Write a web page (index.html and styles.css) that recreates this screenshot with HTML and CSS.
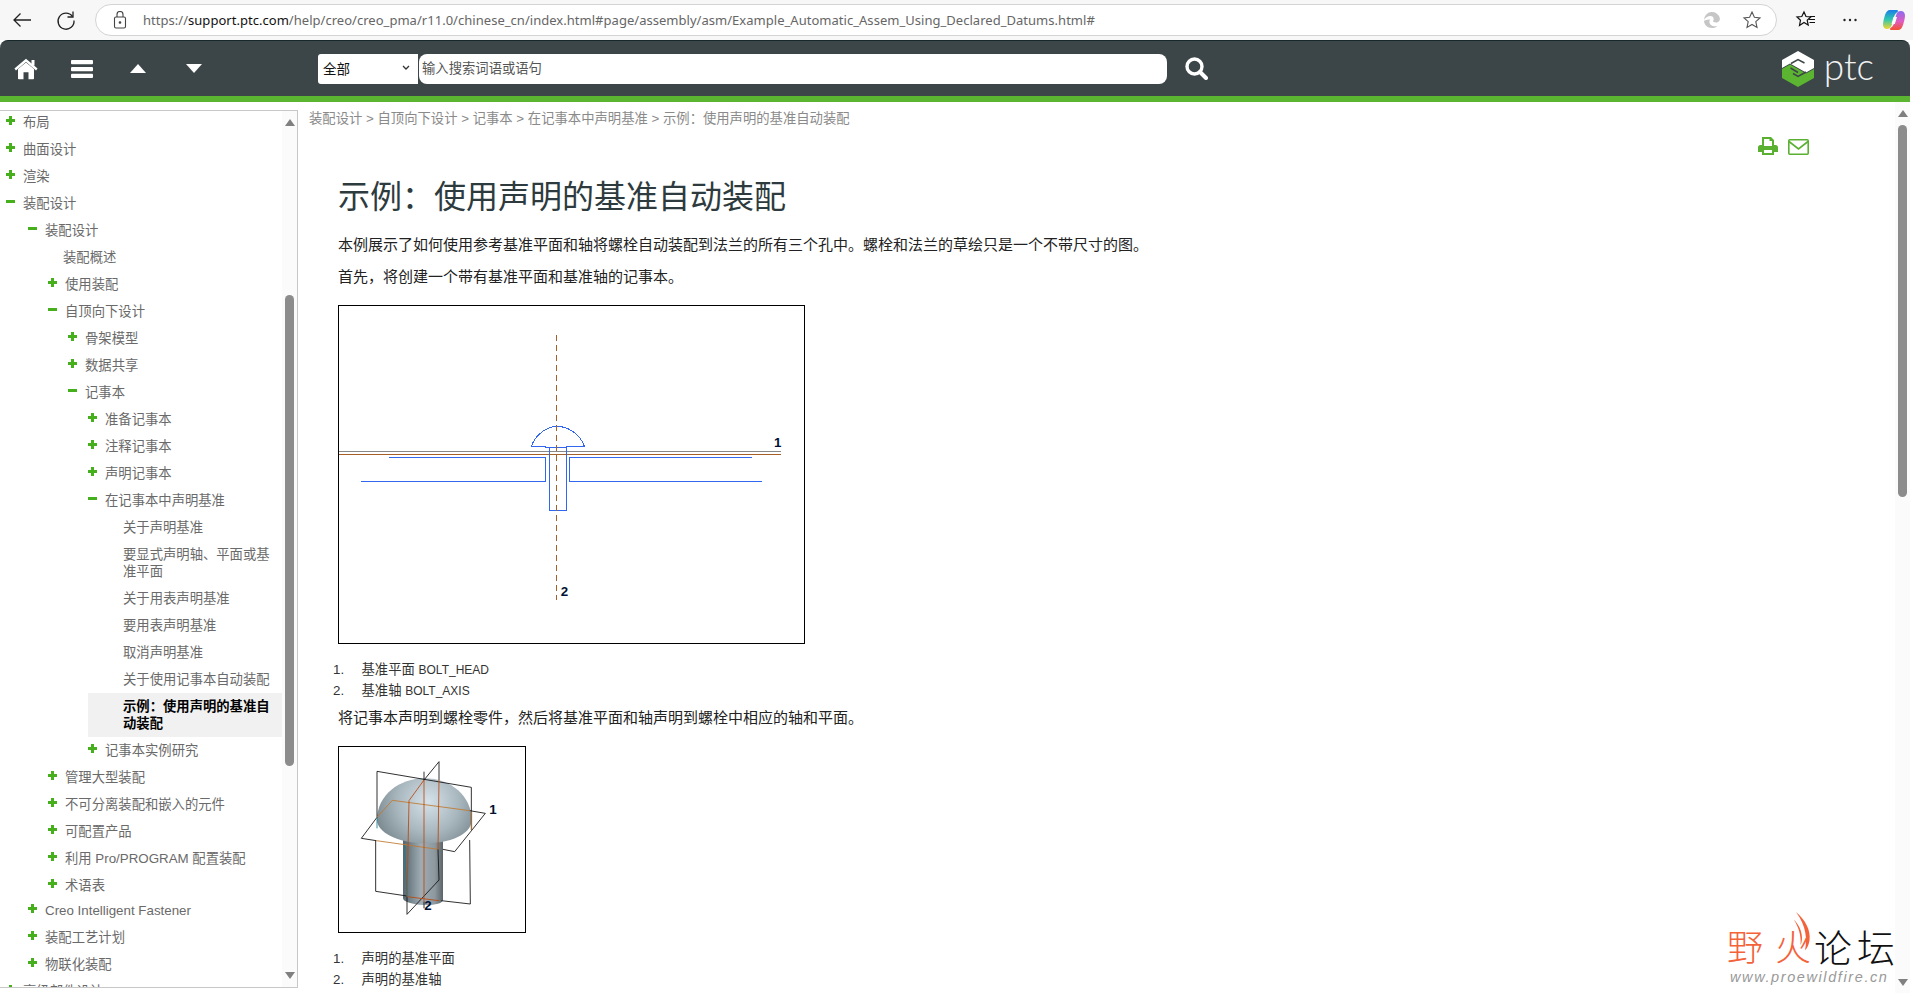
FILE: index.html
```html
<!DOCTYPE html>
<html lang="zh-CN">
<head>
<meta charset="utf-8">
<title>示例：使用声明的基准自动装配</title>
<link rel="stylesheet" href="styles.css">
</head>
<body>
<div class="browser">
  <span class="bicon"><svg width="24" height="24" viewBox="0 0 24 24" fill="none" stroke="#222" stroke-width="1.3"><path d="M21 12H4M10.5 5.5 4 12l6.5 6.5"/></svg></span>
  <span class="bicon"><svg width="24" height="24" viewBox="0 0 24 24" fill="none" stroke="#222" stroke-width="1.3"><path d="M18.5 8.5A8 8 0 1 0 20 12.5"/><path d="M19 3.5v5.5h-5.5"/></svg></span>
  <div class="pill">
    <span class="lock"><svg width="14" height="18" viewBox="0 0 14 18" fill="none" stroke="#444" stroke-width="1.1"><rect x="1.5" y="6" width="11" height="11" rx="1.5"/><path d="M4 6V3.5a3 3 0 0 1 6 0V6"/><circle cx="7" cy="11.5" r=".8" fill="#444"/></svg></span>
    <span class="url">https://<b>support.ptc.com</b>/help/creo/creo_pma/r11.0/chinese_cn/index.html#page/assembly/asm/Example_Automatic_Assem_Using_Declared_Datums.html#</span>
    <span class="bicon"><svg width="20" height="20" viewBox="0 0 20 20"><path fill="#c6c6c6" d="M2 10a8 8 0 0 1 15.800-1.800c.5 2.500-1.500 4.300-3.800 4.300-1.800 0-3-.8-3-1.500 0-.5.700-.6.700-1.800C11.700 7 10 5.800 8 6 4.800 6.300 3 8.500 2 10z"/><path fill="#c6c6c6" d="M2 11c.2 4.200 3.700 7 8 7 2.200 0 4.300-.8 5.700-2.300-2 .8-5 .8-6.800-.7C7.200 13.700 7 11 8 9.500 5.500 9.500 3.300 10 2 11z"/></svg></span>
    <span class="bicon star"><svg width="20" height="20" viewBox="0 0 20 20" fill="none" stroke="#555" stroke-width="1.1"><path d="m10 2 2.400 5.300 5.600.6-4.200 3.800 1.200 5.700-5-2.900-5 2.900 1.200-5.700L2 7.900l5.600-.6z"/></svg></span>
  </div>
  <span class="bicon fav"><svg width="22" height="22" viewBox="0 0 22 22" fill="none" stroke="#111" stroke-width="1.2"><path d="m9 3 2 4.500 4.800.5-3.600 3.200 1 4.800L9 13.500 4.500 16.500l1-5.300L2 8l4.800-.5z"/><path d="M14 10.500h6M14.500 13.500h5.500M15 7.500h5"/></svg></span>
  <span class="bicon dots"><svg width="20" height="20" viewBox="0 0 20 20" fill="#222"><circle cx="4.500" cy="10" r="1.200"/><circle cx="10" cy="10" r="1.200"/><circle cx="15.500" cy="10" r="1.200"/></svg></span>
  <span class="bicon dots"><svg width="22" height="22" viewBox="0 0 22 22"><defs><linearGradient id="cpa" x1="0" y1="0" x2="0" y2="1"><stop offset="0" stop-color="#1b7fe8"/><stop offset=".5" stop-color="#2fc7b0"/><stop offset="1" stop-color="#f4d62c"/></linearGradient><linearGradient id="cpb" x1="0" y1="0" x2="0" y2="1"><stop offset="0" stop-color="#8a6cf0"/><stop offset=".55" stop-color="#e05cc0"/><stop offset="1" stop-color="#f4502c"/></linearGradient></defs><path fill="url(#cpa)" d="M7 1h7c1 0 1.500 1 .5 2-2.500 1.500-3.500 4-4 6.500l-1.500 6C8 18 6.500 20 4 20 1.500 20 0 18 0 15.500 0 13 1 9 2 6 3 3 4.500 1 7 1z"/><path fill="url(#cpb)" d="M15 21H8c-1 0-1.500-1-.5-2 2.500-1.500 3.500-4 4-6.500l1.500-6C13.500 4 15 2 18 2c2.500 0 4 2 4 4.500 0 2.500-1 6.500-2 9.500-1 3-2.500 5-5 5z"/><path fill="#fff" d="M10.500 8h3.500l-2.200 7H8.500z"/></svg></span>
</div>

<header class="top">
  <div class="tools">
    <span class="tool"><svg width="24" height="22" viewBox="0 0 24 22" fill="#fff"><path d="M12 4.500 4 11v9.500a.8.8 0 0 0 .8.8H9.500v-7h5v7h4.700a.8.8 0 0 0 .8-.8V11z"/><path fill="none" stroke="#fff" stroke-width="2.400" d="M1.200 11.500 12 2.300l10.800 9.200"/><path d="M17.500 2h3v5.500h-3z"/></svg></span>
    <span class="tool"><svg width="22" height="18" viewBox="0 0 22 18" fill="#fff"><rect width="22" height="4.200" rx="1"/><rect y="7" width="22" height="4.200" rx="1"/><rect y="13.800" width="22" height="4.200" rx="1"/></svg></span>
    <span class="tool"><svg width="16" height="9" viewBox="0 0 16 9" fill="#fff"><path d="M8 0l8 9H0z"/></svg></span>
    <span class="tool"><svg width="16" height="9" viewBox="0 0 16 9" fill="#fff"><path d="M0 0h16L8 9z"/></svg></span>
  </div>
  <div class="scope"><span>全部</span><svg width="8" height="5" viewBox="0 0 8 5" fill="none" stroke="#333" stroke-width="1.300"><path d="m1 1 3 3 3-3"/></svg></div>
  <div class="search">输入搜索词语或语句</div>
  <span class="find"><svg width="23" height="23" viewBox="0 0 23 23" fill="none" stroke="#fff"><circle cx="9.500" cy="9.500" r="7.500" stroke-width="3.400"/><path d="m15 15 6 6" stroke-width="4" stroke-linecap="round"/></svg></span>
  <div class="logo">
    <svg width="32" height="36" viewBox="0 0 32 36"><path fill="#5cb531" d="M0 18 8 13.500 24 22.500 32 18v9L16 36 0 27z"/><path fill="#fff" d="M16 0l16 9v8l-8 4.500-16-9L0 17V9z"/><path fill="none" stroke="#3c4547" stroke-width="1.500" d="M9 12.500 16 8.500l6.500 3.500M8.500 17 16 21.500M11 22.500l5 3 8-4.500"/></svg>
    <span class="ptc">ptc</span>
  </div>
</header>
<div class="accent"></div>

<div class="content">
  <aside class="side">
    <ul class="tree">
      <li class="row l0 plus"><i class="tw"></i><span>布局</span></li>
      <li class="row l0 plus"><i class="tw"></i><span>曲面设计</span></li>
      <li class="row l0 plus"><i class="tw"></i><span>渲染</span></li>
      <li class="row l0 minus"><i class="tw"></i><span>装配设计</span></li>
      <li class="row l1 minus"><i class="tw"></i><span>装配设计</span></li>
      <li class="row leaf2"><span>装配概述</span></li>
      <li class="row l2 plus"><i class="tw"></i><span>使用装配</span></li>
      <li class="row l2 minus"><i class="tw"></i><span>自顶向下设计</span></li>
      <li class="row l3 plus"><i class="tw"></i><span>骨架模型</span></li>
      <li class="row l3 plus"><i class="tw"></i><span>数据共享</span></li>
      <li class="row l3 minus"><i class="tw"></i><span>记事本</span></li>
      <li class="row l4 plus"><i class="tw"></i><span>准备记事本</span></li>
      <li class="row l4 plus"><i class="tw"></i><span>注释记事本</span></li>
      <li class="row l4 plus"><i class="tw"></i><span>声明记事本</span></li>
      <li class="row l4 minus"><i class="tw"></i><span>在记事本中声明基准</span></li>
      <li class="row leaf5"><span>关于声明基准</span></li>
      <li class="row leaf5"><span>要显式声明轴、平面或基准平面</span></li>
      <li class="row leaf5"><span>关于用表声明基准</span></li>
      <li class="row leaf5"><span>要用表声明基准</span></li>
      <li class="row leaf5"><span>取消声明基准</span></li>
      <li class="row leaf5"><span>关于使用记事本自动装配</span></li>
      <li class="row leaf5 current"><span>示例：使用声明的基准自动装配</span></li>
      <li class="row l4 plus"><i class="tw"></i><span>记事本实例研究</span></li>
      <li class="row l2 plus"><i class="tw"></i><span>管理大型装配</span></li>
      <li class="row l2 plus"><i class="tw"></i><span>不可分离装配和嵌入的元件</span></li>
      <li class="row l2 plus"><i class="tw"></i><span>可配置产品</span></li>
      <li class="row l2 plus"><i class="tw"></i><span>利用 Pro/PROGRAM 配置装配</span></li>
      <li class="row l2 plus"><i class="tw"></i><span>术语表</span></li>
      <li class="row l1 plus pull"><i class="tw"></i><span>Creo Intelligent Fastener</span></li>
      <li class="row l1 plus"><i class="tw"></i><span>装配工艺计划</span></li>
      <li class="row l1 plus"><i class="tw"></i><span>物联化装配</span></li>
      <li class="row l0 plus"><i class="tw"></i><span>高级部件设计</span></li>
    </ul>
    <div class="sb sb-tree"><i class="arrow-up"></i><i class="thumb"></i><i class="arrow-down"></i></div>
  </aside>

  <main class="main">
    <nav class="crumbs">装配设计 &gt; 自顶向下设计 &gt; 记事本 &gt; 在记事本中声明基准 &gt; 示例：使用声明的基准自动装配</nav>
    <div class="actions">
      <svg width="20" height="18" viewBox="0 0 20 18" fill="#5ab031"><path fill-rule="evenodd" d="M4 0h9l3 3v5h1.500A2.500 2.500 0 0 1 20 10.500V15h-4v3H4v-3H0v-4.500A2.500 2.500 0 0 1 2.500 8H4zm2 2v7h8V4h-2.500V2zM6 13v3h8v-3z"/></svg>
      <svg width="21" height="16" viewBox="0 0 21 16" fill="none" stroke="#5ab031" stroke-width="1.600"><rect x=".8" y=".8" width="19.400" height="14.400" rx="1"/><path d="m1 2.500 9.500 7.500L20 2.500"/></svg>
    </div>
    <article class="doc">
      <h1>示例：使用声明的基准自动装配</h1>
      <p class="p1">本例展示了如何使用参考基准平面和轴将螺栓自动装配到法兰的所有三个孔中。螺栓和法兰的草绘只是一个不带尺寸的图。</p>
      <p class="p2">首先，将创建一个带有基准平面和基准轴的记事本。</p>
      <figure class="fig fig1">
        <svg width="465" height="337" viewBox="58 48 1395 1011" fill="none" stroke-width="3">
          <path stroke="#888" d="M58 485H1383"/>
          <path stroke="#a5602a" d="M58 493H1383"/>
          <g stroke="#3366ee">
            <path d="M207 502H677V574H123M1298 502H750V574H1328"/>
            <path d="M688 472V661H739V472"/>
            <path d="M635 469C650 428 688 409 712 409C740 409 780 428 794 469H741V472H676V469Z"/>
          </g>
          <path stroke="#a5602a" stroke-dasharray="18 12" d="M710 135V930"/>
          <text class="fig-label" x="1363" y="472">1</text>
          <text class="fig-label" x="723" y="919">2</text>
        </svg>
      </figure>
      <ol class="notes n1"><li><span>基准平面 <span class="latin">BOLT_HEAD</span></span></li><li><span>基准轴 <span class="latin">BOLT_AXIS</span></span></li></ol>
      <p class="p3">将记事本声明到螺栓零件，然后将基准平面和轴声明到螺栓中相应的轴和平面。</p>
      <figure class="fig fig2">
        <svg width="186" height="185" viewBox="58 51 558 555" fill="none" stroke-width="2.600">
          <defs>
            <radialGradient id="dome" gradientUnits="userSpaceOnUse" cx="325" cy="215" r="170"><stop offset="0" stop-color="#d6e2ea"/><stop offset=".55" stop-color="#a8b6be"/><stop offset="1" stop-color="#78868e"/></radialGradient>
            <linearGradient id="shank" x1="0" y1="0" x2="1" y2="0"><stop offset="0" stop-color="#55656d"/><stop offset=".45" stop-color="#a0acb4"/><stop offset=".8" stop-color="#8c979e"/><stop offset="1" stop-color="#5a6468"/></linearGradient>
          </defs>
          <path fill="url(#shank)" d="M250 320H370V510C370 520 340 527 310 525C280 524 250 515 250 505Z"/>
          <path fill="url(#dome)" d="M172 270C172 195 240 145 315 145C395 145 456 200 456 270C456 305 410 338 320 340C230 340 172 305 172 270Z"/>
          <path stroke="#111" d="M172 124 455 172V300M450 330 452 522 365 512M262 498 168 484V332M172 124V262"/>
          <path stroke="#111" d="M125 325 172 262M125 325 170 332M450 242 497 250 405 365 370 358"/>
          <path stroke="#c07a30" d="M172 262 218 211 450 242M456 245V300M170 332 355 358"/>
          <path stroke="#111" d="M358 95 313 150M358 95V150M355 358 358 450 262 553V500"/>
          <path stroke="#b84a10" d="M313 150 268 212 262 500 358 512M358 150 355 358"/>
          <path stroke="#1c7a8c" d="M172 262V295M255 345 262 500"/>
          <path stroke="#b84a10" d="M313 150V515"/>
          <path stroke="#111" d="M313 125V150M313 515V535"/>
          <text class="fig-label" x="509" y="253">1</text>
          <text class="fig-label" x="314" y="541">2</text>
        </svg>
      </figure>
      <ol class="notes n2"><li><span>声明的基准平面</span></li><li><span>声明的基准轴</span></li></ol>
    </article>
    <div class="sb sb-main"><i class="arrow-up"></i><i class="thumb"></i><i class="arrow-down"></i></div>
  </main>
</div>

<div class="mark">
  <svg class="flame" width="18" height="47" viewBox="0 0 24 52" fill="#f4623a"><path d="M4 0c12 10 20 24 18 38-1 6-3 10-6 13 3-14 2-32-12-51z"/><path d="M1 10c7 7 11 16 11 25 0 4-1 7-2 9 1-12-2-23-9-34z"/></svg>
  <div class="mark-cn"><span class="hot"><span class="ye">野</span>火</span><span class="forum">论<span class="tan">坛</span></span></div>
  <div class="mark-url">www.proewildfire.cn</div>
</div>
</body>
</html>
```
FILE: styles.css
```css
* { box-sizing: border-box; }
html, body { height: 100%; }
body {
  margin: 0;
  height: 993px;
  overflow: hidden;
  background: #fff;
  font-family: "Liberation Sans", "Noto Sans CJK SC", sans-serif;
  display: flex;
  flex-direction: column;
  position: relative;
}
.browser {
  height: 40px;
  flex: none;
  background: #f7f7f7;
  display: flex;
  align-items: center;
  padding-left: 10px;
  gap: 20px;
}
.bicon { width: 24px; height: 24px; display: flex; align-items: center; justify-content: center; flex: none; }
.pill {
  width: 1682px;
  margin-left: -3px;
  height: 32px;
  background: #fff;
  border: 1px solid #d4d4d4;
  border-radius: 16px;
  display: flex;
  align-items: center;
  padding: 0 12px 0 17px;
}
.lock { width: 14px; height: 18px; flex: none; margin-right: 16px; }
.url {
  flex: 1;
  font: 13px "Noto Sans", sans-serif;
  letter-spacing: .03px;
  color: #666;
  white-space: nowrap;
  overflow: hidden;
}
.url b { font-weight: 400; color: #111; }
.star { margin-left: 16px; }
.fav { margin-left: -3px; }
.dots { margin-left: 0; }

.top {
  height: 56px;
  flex: none;
  margin-right: 3px;
  background: #3c4547;
  border-top: 1px solid #16282a;
  border-radius: 8px 8px 0 0;
  display: flex;
  align-items: center;
  padding: 0 36px 0 14px;
}
.tools { display: flex; gap: 32px; width: 304px; flex: none; }
.tool { width: 24px; height: 24px; display: flex; align-items: center; justify-content: center; }
.scope {
  width: 100px;
  height: 30px;
  background: #fff;
  border-radius: 3px 0 0 3px;
  display: flex;
  align-items: center;
  justify-content: space-between;
  padding: 0 8px 2px 5px;
  font-size: 13.500px;
  color: #111;
  flex: none;
}
.search {
  width: 748px;
  height: 30px;
  margin-left: 1px;
  background: #fff;
  border-radius: 8px;
  display: flex;
  align-items: center;
  padding: 0 0 2px 3px;
  font-size: 13.330px;
  color: #555;
  flex: none;
}
.find { width: 23px; height: 23px; margin-left: 18px; flex: none; }
.logo { margin-left: auto; display: flex; align-items: center; gap: 10px; }
.ptc { font: 300 37px/40px Lato, sans-serif; color: #f2f2f2; margin-top: -6px; }
.accent { height: 6px; flex: none; margin-right: 3px; background: #5cb531; }

.content { flex: 1; min-height: 0; display: flex; }
.side {
  width: 298px;
  flex: none;
  height: 878px;
  margin-top: 8px;
  border: 1px solid #c8c8c8;
  border-left: 0;
  display: flex;
}
.tree {
  flex: 1;
  min-width: 0;
  margin: 0;
  padding: 0;
  list-style: none;
  overflow: hidden;
  font-size: 13.330px;
  line-height: 17px;
  color: #6a6a6a;
}
.row { display: flex; padding: 5px 8px 5px 0; }
.row:first-child { margin-top: -2px; }
.tw { width: 9px; height: 9px; margin: 2px 8px 0 0; flex: none; }
.plus .tw {
  background:
    linear-gradient(#45b01c, #45b01c) center / 3px 9px no-repeat,
    linear-gradient(#45b01c, #45b01c) center / 9px 3px no-repeat;
}
.minus .tw { background: linear-gradient(#45b01c, #45b01c) center / 9px 3px no-repeat; }
.l0 { padding-left: 6px; }
.l1 { padding-left: 28px; }
.l2 { padding-left: 48px; }
.l3 { padding-left: 68px; }
.l4 { padding-left: 88px; }
.leaf2 { padding-left: 63px; }
.leaf5 { padding-left: 123px; }
.pull { margin-top: -2px; }
.current { margin-left: 88px; padding-left: 35px; background: #f1f1f1; color: #000; font-weight: 700; }

.sb {
  flex: none;
  width: 15px;
  background: #fbfbfb;
  display: flex;
  flex-direction: column;
  align-items: center;
}
.thumb { display: block; width: 9px; background: #8c8c8c; border-radius: 5px; }
.arrow-up, .arrow-down { display: block; width: 0; height: 0; border-left: 5px solid transparent; border-right: 5px solid transparent; }
.arrow-up { border-bottom: 7px solid #808080; }
.arrow-down { border-top: 7px solid #808080; margin-top: auto; }
.sb-tree { padding: 8px 0; }
.sb-tree .thumb { height: 471px; margin-top: 169px; }
.sb-main { position: absolute; right: 3px; top: 102px; bottom: 0; padding: 8px 0 7px; }
.sb-main .thumb { height: 372px; margin-top: 8px; }

.main { flex: 1; min-width: 0; overflow: hidden; padding: 8px 0 0 11px; }
.crumbs { font-size: 13.330px; line-height: 18px; color: #8a8a8a; }
.actions {
  display: flex;
  justify-content: flex-end;
  align-items: flex-end;
  gap: 10px;
  height: 18px;
  margin-top: 9px;
  padding-right: 104px;
}
.doc { padding-left: 29px; color: #222; }
h1 {
  margin: 20px 0 0;
  font-size: 32px;
  line-height: 44px;
  font-weight: 400;
  color: #2e3b3e;
}
p { margin: 0; font-size: 15px; line-height: 22px; }
.p1 { margin-top: 15px; }
.p2 { margin-top: 10px; }
.p3 { margin-top: 6px; }
.fig { margin: 0; border: 1px solid #000; background: #fff; display: block; }
.fig svg { display: block; }
.fig1 { width: 467px; height: 339px; margin-top: 17px; }
.fig1 path { shape-rendering: crispEdges; }
.fig2 { width: 188px; height: 187px; margin-top: 17px; }
.fig-label { font: 700 40px "Liberation Sans", sans-serif; fill: #001133; }
.notes {
  margin: 15px 0 0 -5px;
  padding: 0;
  list-style: none;
  counter-reset: note;
  font-size: 13.330px;
  line-height: 21px;
  color: #333;
}
.notes li { display: flex; height: 21px; counter-increment: note; }
.notes li::before { content: counter(note) "."; width: 28.500px; flex: none; }
.latin { font-size: 12px; line-height: 1; }

.mark {
  position: absolute;
  left: 1727px;
  top: 908px;
  width: 170px;
  height: 82px;
}
.flame { position: absolute; left: 66px; top: 0; }
.mark-cn { position: absolute; left: 0; top: 20px; display: flex; align-items: center; line-height: 42px; white-space: nowrap; }
.hot { font-size: 36px; color: #f4623a; font-weight: 300; }
.ye { margin-right: 12px; }
.forum { font-size: 38px; color: #111; margin-left: 3px; font-weight: 300; }
.tan { margin-left: 5px; }
.mark-url { position: absolute; left: 3px; top: 60px; font: italic 14.500px/18px "Liberation Sans", sans-serif; letter-spacing: 1.600px; color: #999; white-space: nowrap; }
```
